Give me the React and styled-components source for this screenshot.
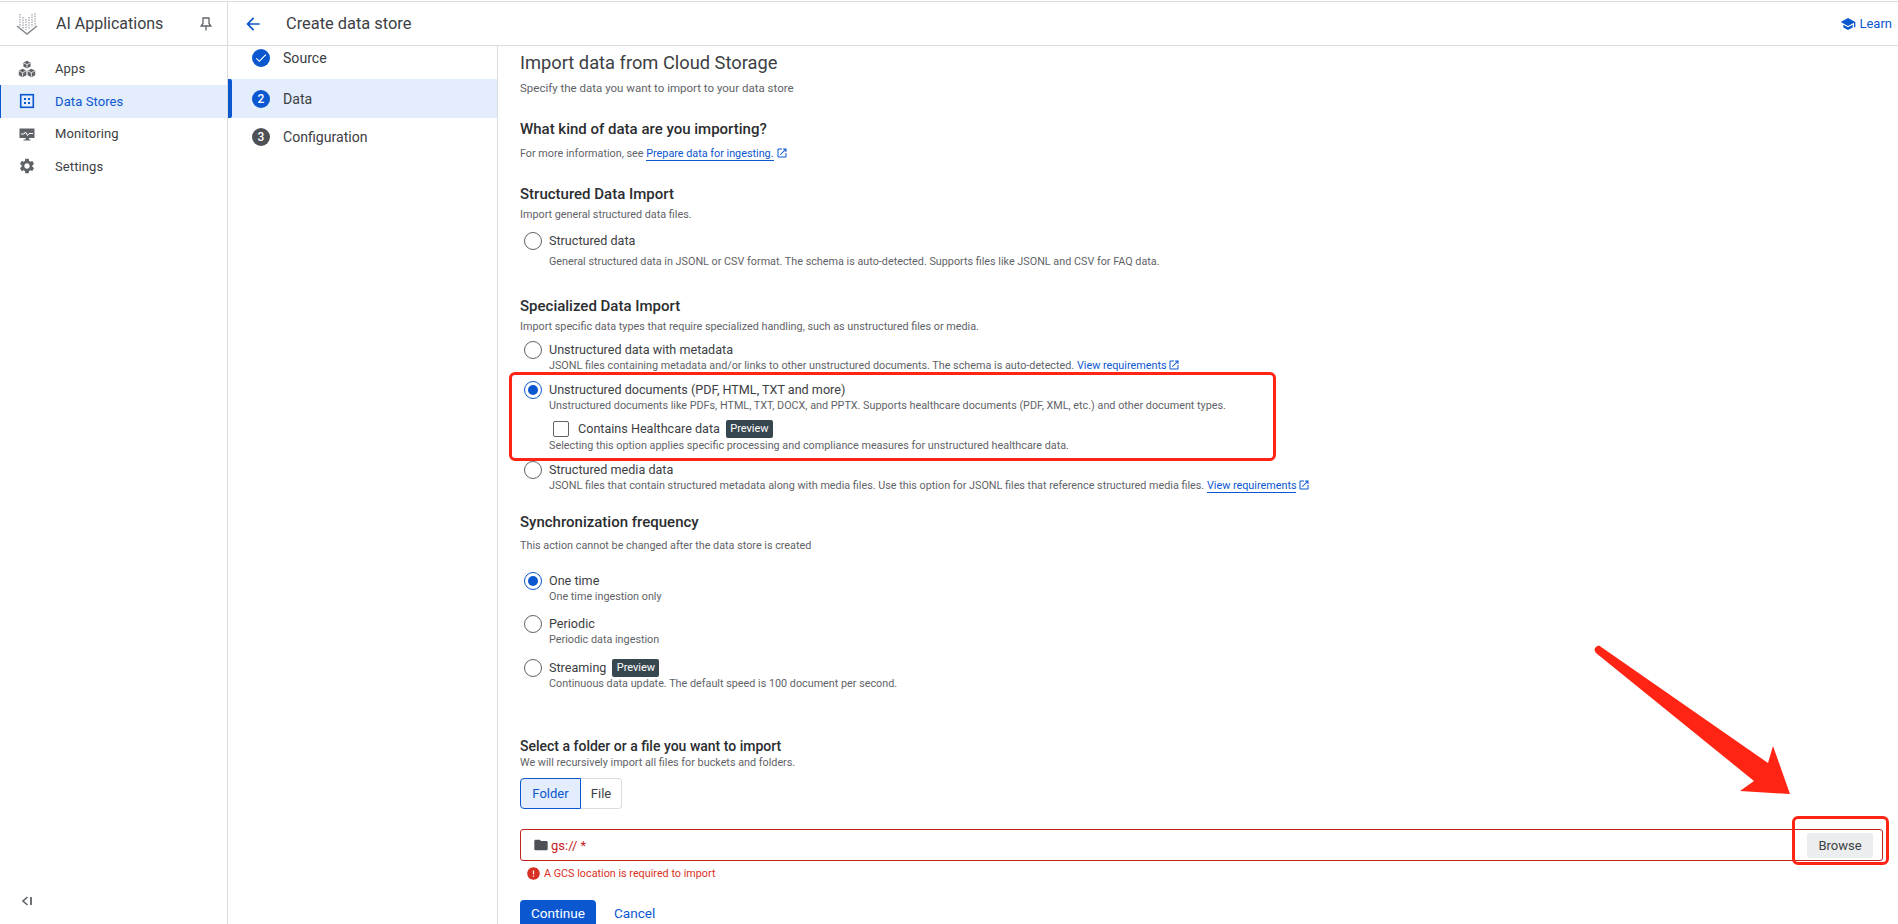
import React from "react";
import styled, { createGlobalStyle } from "styled-components";
import {
  MdArrowBack,
  MdCheck,
  MdError,
  MdFolder,
  MdOpenInNew,
  MdSchool,
  MdSettings,
} from "react-icons/md";

const GlobalStyle = createGlobalStyle`
  html, body {
    margin: 0;
    height: 100%;
    overflow: hidden;
    background: #fff;
    font-family: Roboto, "Liberation Sans", sans-serif;
    color: #202124;
  }
  * { box-sizing: border-box; }
`;

const Page = styled.div`
  position: relative;
  display: flex;
  height: 924px;
  margin-top: 1px;
  border-top: 1px solid #dadce0;
  overflow: hidden;
`;

const Sidebar = styled.aside`
  width: 228px;
  flex: none;
  display: flex;
  flex-direction: column;
  border-right: 1px solid #dadce0;
  height: 922px;
`;

const Brand = styled.div`
  height: 44px;
  flex: none;
  display: flex;
  align-items: center;
  padding: 0 13px 0 16px;
  border-bottom: 1px solid #dadce0;
  color: #5f6368;
`;

const BrandName = styled.div`
  flex: 1;
  margin-left: 18px;
  font-size: 16px;
  color: #3c4043;
`;

const Nav = styled.nav`
  flex: 1;
  padding-top: 6.5px;
`;

const NavItem = styled.div`
  height: 32.5px;
  display: flex;
  align-items: center;
  padding-left: 18px;
  gap: 19px;
  font-size: 13px;
  letter-spacing: 0.1px;
  color: ${(p) => (p.$active ? "#0b57d0" : "#3c4043")};
  background: ${(p) => (p.$active ? "#e3edfb" : "transparent")};
  box-shadow: ${(p) => (p.$active ? "inset 1px 0 0 #0b57d0" : "none")};
  svg {
    flex: none;
    color: ${(p) => (p.$active ? "#0b57d0" : "#5f6368")};
  }
`;

const Collapse = styled.div`
  height: 44px;
  flex: none;
  padding: 12px 0 0 21px;
  color: #5f6368;
`;

const Main = styled.div`
  flex: 1;
  min-width: 0;
  display: flex;
  flex-direction: column;
`;

const Header = styled.header`
  height: 44px;
  flex: none;
  display: flex;
  align-items: center;
  padding: 0 6px 0 15px;
  border-bottom: 1px solid #dadce0;
`;

const BackButton = styled.div`
  display: flex;
  color: #0b57d0;
`;

const HeaderTitle = styled.div`
  flex: 1;
  margin-left: 23px;
  font-size: 16.4px;
  color: #3c4043;
`;

const LearnLink = styled.div`
  display: flex;
  align-items: center;
  gap: 3px;
  font-size: 13px;
  color: #0b57d0;
`;

const Body = styled.div`
  flex: 1;
  min-height: 0;
  display: flex;
`;

const Stepper = styled.div`
  width: 270px;
  flex: none;
  border-right: 1px solid #dadce0;
  overflow: hidden;
`;

const StepList = styled.div`
  margin-top: -6px;
`;

const Step = styled.div`
  position: relative;
  height: 39px;
  display: flex;
  align-items: center;
  padding-left: 24px;
  gap: 13px;
  font-size: 14.1px;
  color: #3c4043;
  background: ${(p) => (p.$active ? "#e3edfb" : "transparent")};
  &:first-child {
    padding-bottom: 3px;
  }
  &:last-child {
    padding-bottom: 1px;
  }
  ${(p) =>
    p.$active &&
    `&::before {
      content: "";
      position: absolute;
      left: 0;
      top: 0;
      bottom: 0;
      width: 4px;
      border-radius: 0 2px 2px 0;
      background: #0b57d0;
    }`}
`;

const StepBadge = styled.span`
  width: 18px;
  height: 18px;
  flex: none;
  border-radius: 50%;
  display: flex;
  align-items: center;
  justify-content: center;
  font-size: 12px;
  font-weight: 500;
  color: #fff;
  background: ${(p) => (p.$muted ? "#4d5156" : "#0b57d0")};
`;

const Content = styled.main`
  flex: 1;
  min-width: 0;
  padding: 6px 15px 0 22px;
  overflow: hidden;
`;

const Title = styled.h1`
  margin: 0;
  font-size: 18.3px;
  font-weight: 400;
  line-height: 22px;
  color: #3c4043;
`;

const Heading = styled.h2`
  margin: ${(p) => p.$top || 22}px 0 -1px;
  padding-top: 1px;
  font-size: ${(p) => p.$size || 15}px;
  font-weight: 500;
  line-height: 20px;
  color: #2b2d30;
`;

const Note = styled.p`
  margin: ${(p) => p.$top ?? 4}px 0 0;
  font-size: ${(p) => p.$size || 10.8}px;
  line-height: 16px;
  color: #5f6368;
`;

const TextLink = styled.a`
  color: #0b57d0;
  border-bottom: ${(p) => (p.$underline ? "1px solid #0b57d0" : "none")};
`;

const LinkIcon = styled(MdOpenInNew)`
  color: #0b57d0;
  margin-left: 2px;
  vertical-align: -2px;
`;

const Option = styled.div`
  margin-top: ${(p) => p.$top}px;
  padding-left: 4px;
  display: grid;
  grid-template-columns: 18px 1fr;
  column-gap: 7px;
`;

const Radio = styled.span`
  width: 18px;
  height: 18px;
  border-radius: 50%;
  border: 1.5px solid ${(p) => (p.$checked ? "#0b57d0" : "#5f6368")};
  display: flex;
  align-items: center;
  justify-content: center;
  &::after {
    content: "";
    display: ${(p) => (p.$checked ? "block" : "none")};
    width: 10px;
    height: 10px;
    border-radius: 50%;
    background: #0b57d0;
  }
`;

const OptionLabel = styled.div`
  display: flex;
  align-items: center;
  gap: 6px;
  font-size: 12.6px;
  line-height: 18px;
  color: #3c4043;
`;

const OptionNote = styled.div`
  grid-column: 2;
  margin-top: ${(p) => p.$top ?? -2}px;
  margin-bottom: -1px;
  padding-top: 1px;
  font-size: 10.8px;
  line-height: 16px;
  color: #5f6368;
`;

const CheckRow = styled.div`
  grid-column: 2;
  margin: 7px 0 0 4px;
  display: flex;
  align-items: center;
  font-size: 12.6px;
  line-height: 18px;
  color: #3c4043;
`;

const Checkbox = styled.span`
  width: 16px;
  height: 16px;
  margin-right: 9px;
  border: 1.5px solid #5f6368;
  border-radius: 2px;
`;

const Badge = styled.span`
  height: 18px;
  width: 47px;
  margin-left: ${(p) => p.$left || 0}px;
  display: inline-flex;
  align-items: center;
  justify-content: center;
  border-radius: 2px;
  background: #37474f;
  color: #fff;
  font-size: 11px;
`;

const Toggle = styled.div`
  margin-top: 7px;
  display: flex;
  width: 102px;
  height: 31px;
`;

const ToggleButton = styled.div`
  display: flex;
  align-items: center;
  justify-content: center;
  width: ${(p) => (p.$active ? 61 : 41)}px;
  font-size: 13px;
  color: ${(p) => (p.$active ? "#0b57d0" : "#3c4043")};
  background: ${(p) => (p.$active ? "#e3edfb" : "#fff")};
  border: 1px solid ${(p) => (p.$active ? "#0b57d0" : "#dadce0")};
  border-left-width: ${(p) => (p.$active ? 1 : 0)}px;
  border-radius: ${(p) => (p.$active ? "4px 0 0 4px" : "0 4px 4px 0")};
`;

const InputBox = styled.div`
  margin-top: 20px;
  height: 32px;
  display: flex;
  align-items: center;
  padding: 0 9px 0 12px;
  border: 1px solid #c5221f;
  border-radius: 3px;
  font-size: 13px;
  color: #c5221f;
  svg {
    color: #4d5156;
    margin-right: 2px;
  }
`;

const Required = styled.span`
  margin-left: 3px;
`;

const BrowseButton = styled.div`
  margin-left: auto;
  width: 66px;
  height: 25px;
  display: flex;
  align-items: center;
  justify-content: center;
  border-radius: 3px;
  background: #ebedef;
  font-size: 13px;
  color: #3c4043;
`;

const ErrorLine = styled.div`
  margin: 4px 0 0 6px;
  height: 16px;
  display: flex;
  align-items: center;
  gap: 3px;
  font-size: 10.8px;
  color: #d93025;
`;

const Actions = styled.div`
  margin-top: 19px;
  display: flex;
  align-items: center;
  gap: 18px;
`;

const PrimaryButton = styled.div`
  width: 76px;
  height: 26px;
  display: flex;
  align-items: center;
  justify-content: center;
  border-radius: 4px 4px 0 0;
  background: #0b57d0;
  color: #fff;
  font-size: 13.6px;
`;

const CancelLink = styled.div`
  font-size: 13.6px;
  color: #0b57d0;
`;

const Highlight = styled.div`
  position: absolute;
  left: ${(p) => p.$x}px;
  top: ${(p) => p.$y}px;
  width: ${(p) => p.$w}px;
  height: ${(p) => p.$h}px;
  border: 3px solid #ff2413;
  border-radius: 6px;
  pointer-events: none;
`;

const ArrowMark = styled.svg`
  position: absolute;
  left: 1590px;
  top: 640px;
  pointer-events: none;
`;

const LogoIcon = () => (
  <svg width="22" height="24" viewBox="0 0 22 24" fill="none">
    <g stroke="#9aa0a6" strokeWidth="1.2" strokeDasharray="1.5 1">
      <path d="M4 2v13M7 5v12M10 7v11M13 5v12M16 2v13" />
      <path d="M19 1v13" />
    </g>
    <path d="M1 14l10 8 10-8" stroke="#80868b" strokeWidth="1.4" />
  </svg>
);

const PinIcon = () => (
  <svg width="16" height="16" viewBox="0 0 16 16" fill="none" stroke="currentColor" strokeWidth="1.3">
    <path d="M5 2h6v5.500l1.800 2.500H3.200L5 7.500z" />
    <path d="M8 10v4.500" />
  </svg>
);

const AppsIcon = () => (
  <svg width="18" height="18" viewBox="0 0 18 18">
    <path d="M9 .8l3.600 1.900v3.900L9 8.500 5.400 6.600V2.700z" fill="currentColor" />
    <path d="M4.600 8.800L8.400 10.700v4.500l-3.800 2-3.800-2v-4.500z" fill="currentColor" />
    <path d="M13.400 8.800l3.800 1.900v4.500l-3.800 2-3.800-2v-4.500z" fill="currentColor" />
    <path
      d="M5.800 3L9 4.600 12.200 3M9 4.600V8M1.200 11L4.600 12.700 8 11M4.600 12.700v4M10 11l3.400 1.700L16.800 11M13.400 12.700v4"
      fill="none"
      stroke="#fff"
      strokeWidth=".8"
    />
  </svg>
);

const DataIcon = () => (
  <svg width="18" height="18" viewBox="0 0 18 18" fill="none">
    <rect x="2.700" y="2.700" width="12.600" height="12.600" stroke="currentColor" strokeWidth="1.600" />
    <path d="M6 6h2v2H6zM10 6h2v2h-2zM6 10h2v2H6zM10 10h2v2h-2z" fill="currentColor" />
  </svg>
);

const MonitorIcon = () => (
  <svg width="18" height="18" viewBox="0 0 18 18">
    <path d="M1.500 3.500h15v9.500h-5.500v1.500h1.500v1h-7v-1H7.500V13H1.500z" fill="currentColor" />
    <path d="M3 9h3l1.500-2 2 3.500L11 8.500h4" fill="none" stroke="#fff" strokeWidth="1" />
  </svg>
);

const CollapseIcon = () => (
  <svg width="12" height="12" viewBox="0 0 12 12" fill="none" stroke="currentColor">
    <path d="M6.500 2L2 6l4.500 4" strokeWidth="1.600" />
    <path d="M10 2v8" strokeWidth="1.800" />
  </svg>
);

const External = () => <LinkIcon size={12} />;

const navItems = [
  { label: "Apps", icon: <AppsIcon /> },
  { label: "Data Stores", icon: <DataIcon />, active: true },
  { label: "Monitoring", icon: <MonitorIcon /> },
  { label: "Settings", icon: <MdSettings size={18} /> },
];

export default function App() {
  return (
    <>
      <GlobalStyle />
      <Page>
        <Sidebar>
          <Brand>
            <LogoIcon />
            <BrandName>AI Applications</BrandName>
            <PinIcon />
          </Brand>
          <Nav>
            {navItems.map((item) => (
              <NavItem key={item.label} $active={item.active}>
                {item.icon}
                {item.label}
              </NavItem>
            ))}
          </Nav>
          <Collapse>
            <CollapseIcon />
          </Collapse>
        </Sidebar>
        <Main>
          <Header>
            <BackButton>
              <MdArrowBack size={20} />
            </BackButton>
            <HeaderTitle>Create data store</HeaderTitle>
            <LearnLink>
              <MdSchool size={16} />
              Learn
            </LearnLink>
          </Header>
          <Body>
            <Stepper>
              <StepList>
                <Step>
                  <StepBadge>
                    <MdCheck size={14} />
                  </StepBadge>
                  Source
                </Step>
                <Step $active>
                  <StepBadge>2</StepBadge>
                  Data
                </Step>
                <Step>
                  <StepBadge $muted>3</StepBadge>
                  Configuration
                </Step>
              </StepList>
            </Stepper>
            <Content>
              <Title>Import data from Cloud Storage</Title>
              <Note $top={6} $size={11.5}>Specify the data you want to import to your data store</Note>

              <Heading>What kind of data are you importing?</Heading>
              <Note $top={8}>
                For more information, see{" "}
                <TextLink $underline>Prepare data for ingesting.</TextLink>
                <External />
              </Note>

              <Heading $top={21}>Structured Data Import</Heading>
              <Note>Import general structured data files.</Note>
              <Option $top={9}>
                <Radio />
                <OptionLabel>Structured data</OptionLabel>
                <OptionNote $top={3}>
                  General structured data in JSONL or CSV format. The schema is auto-detected. Supports files like JSONL and CSV for FAQ data.
                </OptionNote>
              </Option>

              <Heading $top={26}>Specialized Data Import</Heading>
              <Note>Import specific data types that require specialized handling, such as unstructured files or media.</Note>
              <Option $top={6}>
                <Radio />
                <OptionLabel>Unstructured data with metadata</OptionLabel>
                <OptionNote>
                  JSONL files containing metadata and/or links to other unstructured documents. The schema is auto-detected.{" "}
                  <TextLink>View requirements</TextLink>
                  <External />
                </OptionNote>
              </Option>
              <Option $top={8}>
                <Radio $checked />
                <OptionLabel>Unstructured documents (PDF, HTML, TXT and more)</OptionLabel>
                <OptionNote>
                  Unstructured documents like PDFs, HTML, TXT, DOCX, and PPTX. Supports healthcare documents (PDF, XML, etc.) and other document types.
                </OptionNote>
                <CheckRow>
                  <Checkbox />
                  Contains Healthcare data
                  <Badge $left={6}>Preview</Badge>
                </CheckRow>
                <OptionNote $top={-1}>
                  Selecting this option applies specific processing and compliance measures for unstructured healthcare data.
                </OptionNote>
              </Option>
              <Option $top={8}>
                <Radio />
                <OptionLabel>Structured media data</OptionLabel>
                <OptionNote>
                  JSONL files that contain structured metadata along with media files. Use this option for JSONL files that reference structured media files.{" "}
                  <TextLink $underline>View requirements</TextLink>
                  <External />
                </OptionNote>
              </Option>

              <Heading $top={18}>Synchronization frequency</Heading>
              <Note $top={7}>This action cannot be changed after the data store is created</Note>
              <Option $top={18}>
                <Radio $checked />
                <OptionLabel>One time</OptionLabel>
                <OptionNote>One time ingestion only</OptionNote>
              </Option>
              <Option $top={11}>
                <Radio />
                <OptionLabel>Periodic</OptionLabel>
                <OptionNote>Periodic data ingestion</OptionNote>
              </Option>
              <Option $top={12}>
                <Radio />
                <OptionLabel>
                  Streaming
                  <Badge>Preview</Badge>
                </OptionLabel>
                <OptionNote>Continuous data update. The default speed is 100 document per second.</OptionNote>
              </Option>

              <Heading $top={44} $size={14}>Select a folder or a file you want to import</Heading>
              <Note $top={-1}>We will recursively import all files for buckets and folders.</Note>
              <Toggle>
                <ToggleButton $active>Folder</ToggleButton>
                <ToggleButton>File</ToggleButton>
              </Toggle>
              <InputBox>
                <MdFolder size={16} />
                gs://
                <Required>*</Required>
                <BrowseButton>Browse</BrowseButton>
              </InputBox>
              <ErrorLine>
                <MdError size={15} />
                A GCS location is required to import
              </ErrorLine>
              <Actions>
                <PrimaryButton>Continue</PrimaryButton>
                <CancelLink>Cancel</CancelLink>
              </Actions>
            </Content>
          </Body>
        </Main>
        <Highlight $x={509} $y={370} $w={767} $h={89} />
        <Highlight $x={1792} $y={814} $w={97} $h={49} />
        <ArrowMark width="210" height="160" viewBox="0 0 210 160">
          <path
            d="M9 3.500L178 121L183 104L200 152L150 149L164 139L6 11Q2 6 9 3.500Z"
            fill="#ff2413"
          />
        </ArrowMark>
      </Page>
    </>
  );
}
